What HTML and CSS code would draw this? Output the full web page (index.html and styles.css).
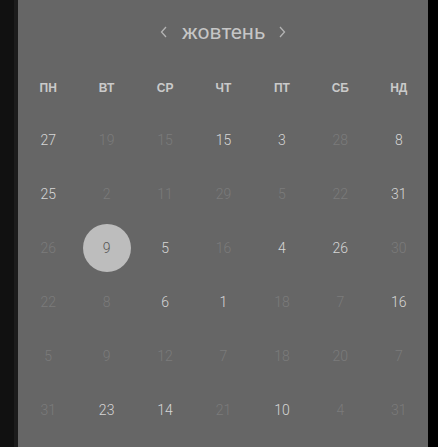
FILE: index.html
```html
<!DOCTYPE html>
<html lang="uk">
<head>
<meta charset="utf-8">
<link rel="stylesheet" href="styles.css">
</head>
<body>
<div class="screen">
  <div class="side"></div>
  <div class="side-edge"></div>
  <div class="panel">
    <div class="header">
      <span class="chev"><svg width="8" height="12" viewBox="0 0 8 12"><path d="M6 1 L1.5 6 L6 11" fill="none" stroke="currentColor" stroke-width="1.3"/></svg></span>
      <span class="month">жовтень</span>
      <span class="chev"><svg width="8" height="12" viewBox="0 0 8 12"><path d="M2 1 L6.5 6 L2 11" fill="none" stroke="currentColor" stroke-width="1.3"/></svg></span>
    </div>
    <div class="grid">
      <div class="wd">ПН</div><div class="wd">ВТ</div><div class="wd">СР</div><div class="wd">ЧТ</div><div class="wd">ПТ</div><div class="wd">СБ</div><div class="wd">НД</div>

      <div class="d">27</div><div class="d o">19</div><div class="d o">15</div><div class="d">15</div><div class="d">3</div><div class="d o">28</div><div class="d">8</div>
      <div class="d">25</div><div class="d o">2</div><div class="d o">11</div><div class="d o">29</div><div class="d o">5</div><div class="d o">22</div><div class="d">31</div>
      <div class="d o">26</div><div class="d"><span class="sel">9</span></div><div class="d">5</div><div class="d o">16</div><div class="d">4</div><div class="d">26</div><div class="d o">30</div>
      <div class="d o">22</div><div class="d o">8</div><div class="d">6</div><div class="d">1</div><div class="d o">18</div><div class="d o">7</div><div class="d">16</div>
      <div class="d o">5</div><div class="d o">9</div><div class="d o">12</div><div class="d o">7</div><div class="d o">18</div><div class="d o">20</div><div class="d o">7</div>
      <div class="d o">31</div><div class="d">23</div><div class="d">14</div><div class="d o">21</div><div class="d">10</div><div class="d o">4</div><div class="d o">31</div>
    </div>
  </div>
  <div class="right"></div>
</div>
</body>
</html>
```

FILE: styles.css
```css
html, body {
  margin: 0;
  padding: 0;
  background: #000;
}
.screen {
  display: flex;
  width: 438px;
  height: 447px;
  overflow: hidden;
  font-family: Roboto, "Noto Sans", sans-serif;
}
.side {
  width: 14px;
  background: #111;
}
.side-edge {
  width: 4px;
  background: #1c1c1c;
}
.panel {
  width: 410px;
  background: #666;
  display: flex;
  flex-direction: column;
}
.right {
  flex: 1;
  background: #000;
}
.header {
  height: 66px;
  display: flex;
  align-items: center;
  justify-content: center;
  gap: 13px;
  color: #c6c6c6;
}
.month {
  font-size: 21px;
  line-height: 1;
  padding-bottom: 1px;
  margin-left: 1px;
}
.chev {
  display: flex;
  color: #b4b4b4;
  margin-bottom: 2px;
}
.grid {
  display: grid;
  grid-template-columns: repeat(7, 1fr);
  grid-template-rows: 50px;
  grid-auto-rows: 54px;
  margin-top: -3px;
  padding-left: 1px;
}
.wd {
  display: flex;
  align-items: center;
  justify-content: center;
  font-family: "Liberation Sans", Arial, sans-serif;
  font-size: 12px;
  font-weight: 700;
  color: #cacaca;
}
.grid .wd { grid-row: 1; }
.d {
  display: flex;
  align-items: center;
  justify-content: center;
  font-size: 14px;
  font-weight: 300;
  color: #d6d6d6;
}
.d.o {
  color: #7b7b7b;
}
.sel {
  width: 48px;
  height: 48px;
  border-radius: 50%;
  background: #bdbdbd;
  color: #555;
  display: flex;
  align-items: center;
  justify-content: center;
}
```
